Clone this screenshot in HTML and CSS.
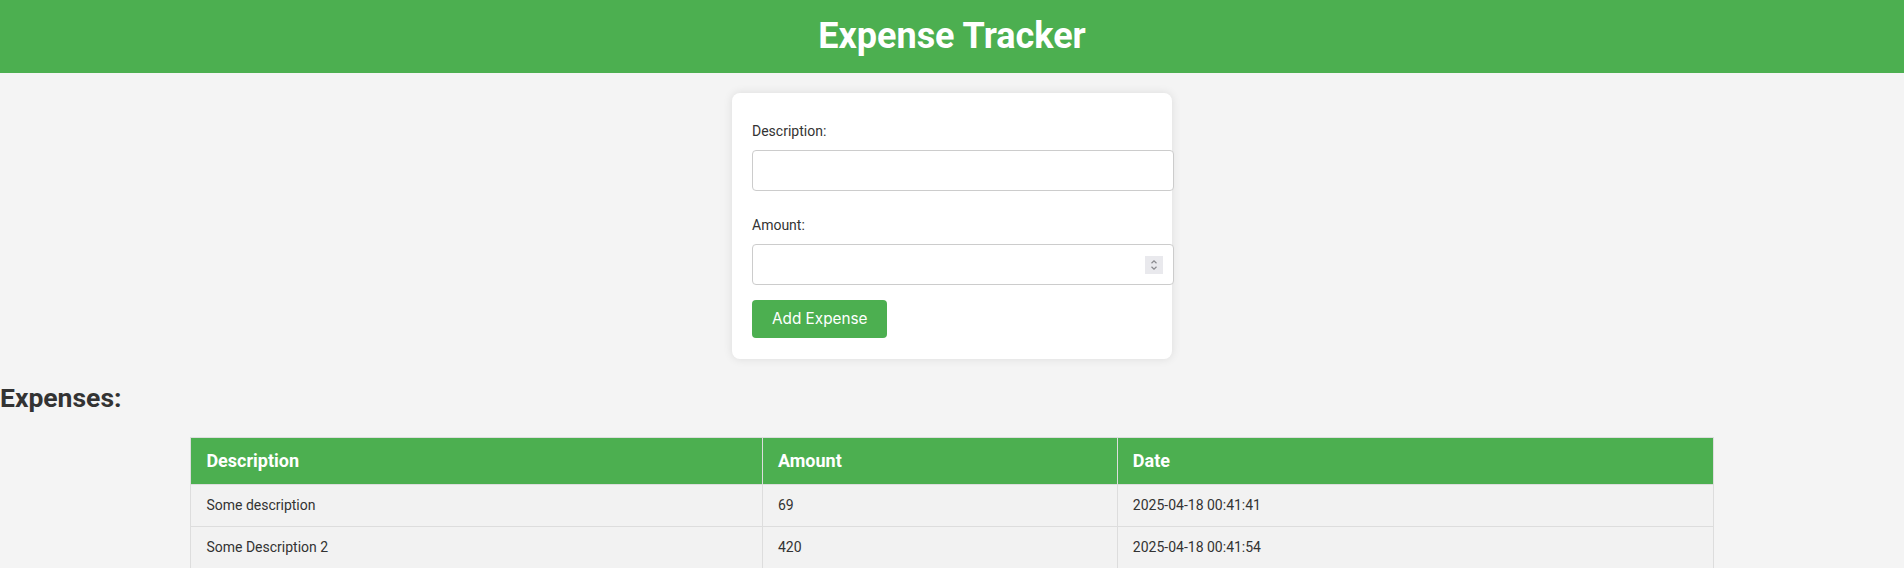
FILE: index.html
```html
<!DOCTYPE html>
<html lang="en">
<head>
<meta charset="utf-8">
<title>Expense Tracker</title>
<link rel="stylesheet" href="styles.css">
</head>
<body>
<header class="site-header">
  <h1 class="site-title">Expense Tracker</h1>
</header>
<main>
  <form class="card">
    <label class="field-label" for="desc">Description:</label>
    <input class="field-input" id="desc" type="text">
    <label class="field-label" for="amount">Amount:</label>
    <div class="number-wrap">
      <input class="field-input" id="amount" type="number">
      <span class="spin">
        <svg width="18" height="18" viewBox="0 0 18 18"><path d="M6.5 7.2 L9 4.8 L11.5 7.2" fill="none" stroke="#8a8a8e" stroke-width="1.2"/><path d="M6.5 10.8 L9 13.2 L11.5 10.8" fill="none" stroke="#8a8a8e" stroke-width="1.2"/></svg>
      </span>
    </div>
    <button class="add-btn" type="button">Add Expense</button>
  </form>
  <h2 class="section-title">Expenses:</h2>
  <table class="expenses">
    <thead>
      <tr><th>Description</th><th>Amount</th><th>Date</th></tr>
    </thead>
    <tbody>
      <tr><td>Some description</td><td>69</td><td>2025-04-18 00:41:41</td></tr>
      <tr><td>Some Description 2</td><td>420</td><td>2025-04-18 00:41:54</td></tr>
    </tbody>
  </table>
</main>
</body>
</html>
```

FILE: styles.css
```css
body {
  margin: 0;
  background: #f4f4f4;
  color: #333;
  font-family: Roboto, "Liberation Sans", sans-serif;
}
.site-header {
  background: #4caf50;
  color: #fff;
  padding: 15px 0 16px;
  text-align: center;
}
.site-title {
  margin: 0;
  font-size: 36px;
  font-weight: 700;
  line-height: 42px;
}
.card {
  display: block;
  width: 400px;
  margin: 20px auto;
  padding: 20px 20px 21px;
  background: #fff;
  border-radius: 8px;
  box-shadow: 0 0 10px rgba(0, 0, 0, 0.1);
}
.field-label {
  display: block;
  font-size: 14px;
  margin: 10px 0 11px;
}
.field-label + .field-input {
  margin-bottom: 26px;
}
.field-input {
  display: block;
  width: 100%;
  padding: 10px;
  border: 1px solid #ccc;
  border-radius: 4px;
  font-size: 16px;
  font-family: Roboto, sans-serif;
  line-height: 18.75px;
  background: #fff;
  margin: 0;
  outline: none;
}
.field-input::-webkit-inner-spin-button,
.field-input::-webkit-outer-spin-button {
  -webkit-appearance: none;
  margin: 0;
}
.number-wrap {
  position: relative;
}
.spin {
  position: absolute;
  right: -11px;
  top: 12px;
  width: 18px;
  height: 18px;
  background: #e9e9ed;
  display: block;
}
.spin svg {
  display: block;
}
.add-btn {
  display: block;
  margin-top: 15px;
  padding: 10px 20px;
  background: #4caf50;
  color: #fff;
  border: none;
  border-radius: 4px;
  font-size: 15.3px;
  line-height: 18.75px;
  font-family: Inter, sans-serif;
}
.section-title {
  margin: 23px 0 24px;
  font-size: 26.5px;
  font-weight: 700;
}
.expenses {
  width: 80%;
  margin: 0 auto;
  border-collapse: collapse;
}
.expenses th,
.expenses td {
  border: 1px solid #ddd;
  padding: 12px 15px;
  text-align: left;
}
.expenses th {
  background: #4caf50;
  color: #fff;
  font-size: 18px;
  line-height: 22px;
  font-weight: 700;
}
.expenses td {
  font-size: 14px;
  line-height: 17px;
  background: #f2f2f2;
}
```
